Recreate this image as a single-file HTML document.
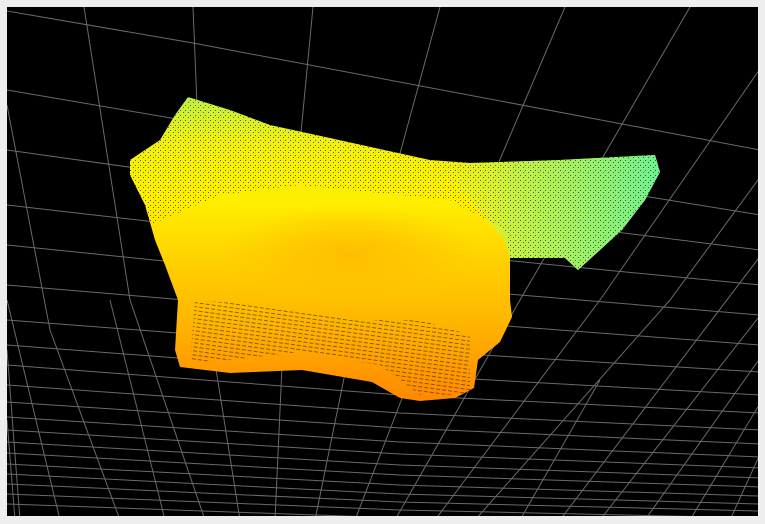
<!DOCTYPE html>
<html><head><meta charset="utf-8"><style>
html,body{margin:0;padding:0;background:#eeeeee;width:765px;height:524px;overflow:hidden}
svg{position:absolute;left:0;top:0}
</style></head><body>
<svg width="765" height="524" viewBox="0 0 765 524">
<defs>
<clipPath id="c"><rect x="7" y="7" width="751" height="509"/></clipPath>
<linearGradient id="g1" x1="0" y1="0" x2="0" y2="1">
<stop offset="0" stop-color="#c0f040"/>
<stop offset="0.15" stop-color="#f0f010"/>
<stop offset="0.35" stop-color="#ffee00"/>
<stop offset="0.55" stop-color="#ffd000"/>
<stop offset="0.75" stop-color="#ffb400"/>
<stop offset="1" stop-color="#ff8800"/>
</linearGradient>
<linearGradient id="g2" x1="0" y1="0" x2="1" y2="0">
<stop offset="0" stop-color="#e8f020" stop-opacity="0"/>
<stop offset="0.35" stop-color="#c8f040"/>
<stop offset="1" stop-color="#70f090"/>
</linearGradient>
<radialGradient id="g3" cx="0.5" cy="0.5" r="0.5">
<stop offset="0" stop-color="#ffbe00"/>
<stop offset="1" stop-color="#ffbe00" stop-opacity="0"/>
</radialGradient>
<pattern id="dots" width="5" height="5" patternUnits="userSpaceOnUse">
<rect x="0" y="0" width="1" height="1" fill="#000"/>
<rect x="3" y="2" width="1" height="1" fill="#000"/>
</pattern>
<pattern id="lines" width="6" height="4" patternUnits="userSpaceOnUse" patternTransform="rotate(8)">
<rect x="0" y="0" width="4" height="1" fill="#000"/>
</pattern>
</defs>
<rect x="7" y="7" width="751" height="509" fill="#000"/>
<g clip-path="url(#c)" stroke="#6a6a6a" stroke-width="1" fill="none">
<path d="M7 11 L193 43 L760 150"/>
<path d="M7 90 L300 140 L760 215"/>
<path d="M7 150 L400 205 L760 250"/>
<path d="M7 205 L400 250 L760 285"/>
<path d="M7 245 L400 285 L760 315"/>
<path d="M7 285 L400 318 L760 345"/>
<path d="M7 320 L400 350 L760 372"/>
<path d="M7 345 L400 375 L760 395"/>
<path d="M7 365 L400 395 L760 413"/>
<path d="M7 385 L400 413 L760 430"/>
<path d="M7 402 L400 428 L760 444"/>
<path d="M7 417 L400 442 L760 457"/>
<path d="M7 430 L400 454 L760 468"/>
<path d="M7 442 L400 465 L760 478"/>
<path d="M7 453 L400 475 L760 487"/>
<path d="M7 464 L400 485 L760 496"/>
<path d="M7 474 L400 494 L760 504"/>
<path d="M7 484 L400 502 L760 511"/>
<path d="M7 494 L400 510 L760 518"/>
<path d="M7 504 L400 518"/>
<path d="M84 7 L130 300 L205 520"/>
<path d="M193 7 L205 300 L240 520"/>
<path d="M7 105 L50 330 L120 520"/>
<path d="M7 300 L60 520"/>
<path d="M313 7 L285 300 L275 520"/>
<path d="M440 7 L360 300 L315 520"/>
<path d="M565 7 L440 300 L355 520"/>
<path d="M690 7 L520 300 L395 520"/>
<path d="M780 40 L600 300 L435 520"/>
<path d="M780 150 L670 300 L475 520"/>
<path d="M780 230 L560 520"/>
<path d="M780 290 L600 520"/>
<path d="M780 330 L645 520"/>
<path d="M780 370 L690 520"/>
<path d="M780 410 L730 520"/>
<path d="M7 350 L20 520"/>
<path d="M7 420 L15 520"/>
<path d="M165 520 L110 300"/>
<path d="M520 520 L600 380"/>
</g>
<path d="M188 97 L230 110 L270 125 L330 138 L430 160 L470 163 L560 160 L655 155 L660 172 L645 200 L622 230 L578 270 L565 258 L510 258 L510 300 L512 317 L500 342 L478 360 L474 388 L455 398 L420 401 L400 398 L372 382 L302 370 L230 373 L180 367 L175 350 L178 300 L165 265 L155 240 L145 205 L130 175 L130 160 L160 140 L175 115 Z" fill="url(#g1)"/>
<path d="M430 160 L470 163 L560 160 L655 155 L660 172 L645 200 L622 230 L578 270 L565 258 L510 258 L505 240 L470 200 Z" fill="url(#g2)"/>
<ellipse cx="350" cy="255" rx="130" ry="50" fill="url(#g3)"/>
<path d="M188 97 L230 110 L270 125 L330 138 L430 160 L470 163 L560 160 L655 155 L660 172 L645 200 L622 230 L578 270 L565 258 L510 258 L505 230 L450 200 L300 185 L220 195 L150 225 L130 175 L130 160 L160 140 L175 115 Z" fill="url(#dots)" opacity="0.6"/>
<path d="M195 300 L260 305 L350 320 L420 320 L470 335 L470 395 L420 395 L380 365 L300 352 L230 360 L190 362 Z" fill="url(#lines)" opacity="0.45"/>
</svg>
</body></html>
